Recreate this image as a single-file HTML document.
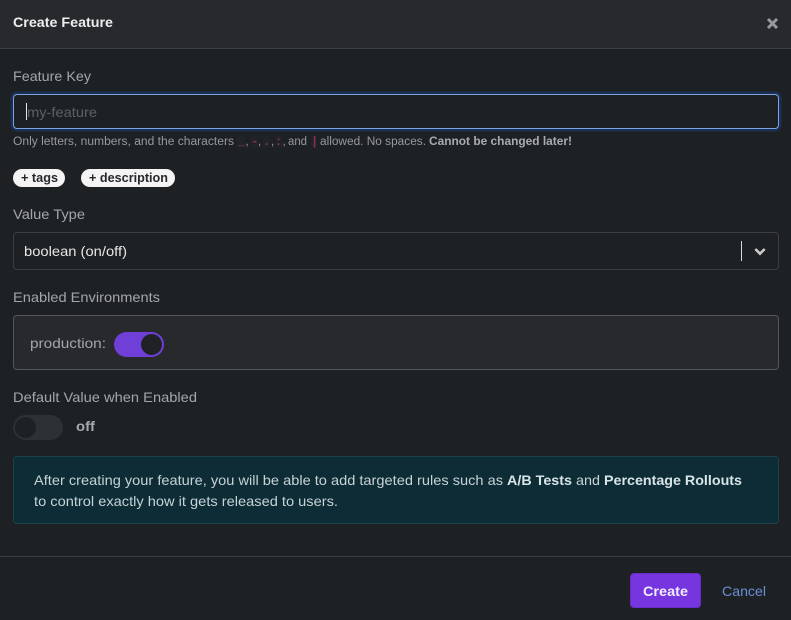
<!DOCTYPE html>
<html lang="en"><head><meta charset="utf-8"><title>Create Feature</title>
<style>
html,body{margin:0;padding:0;background:#1e2124;}
body{position:relative;width:791px;height:620px;overflow:hidden;font-family:"Liberation Sans",sans-serif;}
.a{position:absolute;box-sizing:border-box;}
svg{position:absolute;left:0;top:0;}
text{font-family:"Liberation Sans",sans-serif;font-size:14px;}
.l{fill:#a3a6aa;}
.b{font-weight:700;}
.h{font-size:11.5px;fill:#96999d;}
.c{font-size:12px;fill:#8a3050;font-weight:700;font-family:"Liberation Mono",monospace;}
.t{fill:#c6d2d6;}
.tb{fill:#d8e4e8;font-weight:700;}
</style></head><body>
<div class="a" style="left:0;top:0;width:791px;height:49px;background:#27292d;border-bottom:1px solid #3e4043;"></div>
<div class="a" style="left:13px;top:94px;width:766px;height:35px;border:1px solid #7ba5e2;border-radius:4px;background:#1e2124;box-shadow:0 0 0 2.5px #1c2f52;"></div>
<div class="a" style="left:26px;top:103px;width:1px;height:17px;background:#e8e8e8;"></div>
<div class="a" style="left:13px;top:169px;width:52px;height:18px;background:#f4f4f5;border-radius:9px;"></div>
<div class="a" style="left:81px;top:169px;width:94px;height:18px;background:#f4f4f5;border-radius:9px;"></div>
<div class="a" style="left:13px;top:232px;width:766px;height:38px;border:1px solid #3c3e42;border-radius:4px;"></div>
<div class="a" style="left:741px;top:241px;width:1px;height:20px;background:#d8d8d8;"></div>
<div class="a" style="left:13px;top:315px;width:766px;height:55px;background:#27292d;border:1px solid #54575b;border-radius:4px;"></div>
<div class="a" style="left:114px;top:332px;width:50px;height:25px;background:#6f3fd8;border-radius:13px;"></div>
<div class="a" style="left:141px;top:334px;width:21px;height:21px;background:#1f2125;border-radius:50%;"></div>
<div class="a" style="left:13px;top:415px;width:50px;height:25px;background:#2d3034;border-radius:13px;"></div>
<div class="a" style="left:15px;top:417px;width:21px;height:21px;background:#1e2124;border-radius:50%;"></div>
<div class="a" style="left:13px;top:456px;width:766px;height:68px;background:#0d2c35;border:1px solid #1b414b;border-radius:4px;"></div>
<div class="a" style="left:0;top:556px;width:791px;height:1px;background:#3a3c3f;"></div>
<div class="a" style="left:630px;top:573px;width:71px;height:35px;background:#7735df;border:1px solid #6a2cc9;border-radius:4px;"></div>
<svg width="791" height="620" xmlns="http://www.w3.org/2000/svg">
<text x="13" y="27" textLength="100" lengthAdjust="spacingAndGlyphs" class="b" fill="#edeef0">Create Feature</text>
<path d="M768 19l9 9M777 19l-9 9" stroke="#97999c" stroke-width="3" fill="none"/>
<text x="13" y="81" textLength="78" lengthAdjust="spacingAndGlyphs" class="l">Feature Key</text>
<text x="27" y="117" textLength="70" lengthAdjust="spacingAndGlyphs" fill="#5c6066">my-feature</text>
<text x="13" y="145" textLength="221" lengthAdjust="spacingAndGlyphs" class="h">Only letters, numbers, and the characters</text>
<rect x="237" y="136" width="8" height="12" rx="2" fill="#212327"/>
<rect x="250" y="136" width="8" height="12" rx="2" fill="#212327"/>
<rect x="263" y="136" width="7" height="12" rx="2" fill="#212327"/>
<rect x="275" y="136" width="7" height="12" rx="2" fill="#212327"/>
<rect x="311" y="136" width="6" height="12" rx="2" fill="#212327"/>
<text x="238" y="145" class="c">_</text><text x="245.5" y="145" class="h">,</text>
<text x="251" y="145" class="c">-</text><text x="258" y="145" class="h">,</text>
<text x="263" y="145" class="c">.</text><text x="271" y="145" class="h">,</text>
<text x="275" y="145" class="c">:</text><text x="282.5" y="145" class="h">,</text>
<text x="288" y="145" textLength="19" lengthAdjust="spacingAndGlyphs" class="h">and</text>
<text x="311" y="145" class="c">|</text>
<text x="320" y="145" textLength="106" lengthAdjust="spacingAndGlyphs" class="h">allowed. No spaces.</text>
<text x="429" y="145" textLength="143" lengthAdjust="spacingAndGlyphs" class="h b" style="fill:#a8abaf">Cannot be changed later!</text>
<text x="21" y="182" textLength="37" lengthAdjust="spacingAndGlyphs" class="b" style="font-size:12.5px" fill="#26282c">+ tags</text>
<text x="89" y="182" textLength="79" lengthAdjust="spacingAndGlyphs" class="b" style="font-size:12.5px" fill="#26282c">+ description</text>
<text x="13" y="219" textLength="72" lengthAdjust="spacingAndGlyphs" class="l">Value Type</text>
<text x="24" y="256" textLength="103" lengthAdjust="spacingAndGlyphs" fill="#e6e7e9">boolean (on/off)</text>
<path d="M755.3 249l4.7 4.7 4.7-4.7" stroke="#c9cacc" stroke-width="2.6" fill="none"/>
<text x="13" y="302" textLength="147" lengthAdjust="spacingAndGlyphs" class="l">Enabled Environments</text>
<text x="30" y="348" textLength="76" lengthAdjust="spacingAndGlyphs" class="l">production:</text>
<text x="13" y="402" textLength="184" lengthAdjust="spacingAndGlyphs" class="l">Default Value when Enabled</text>
<text x="76" y="431" textLength="19" lengthAdjust="spacingAndGlyphs" class="b" fill="#a6a9ad">off</text>
<text x="34" y="485" textLength="469" lengthAdjust="spacingAndGlyphs" class="t">After creating your feature, you will be able to add targeted rules such as</text>
<text x="507" y="485" textLength="65" lengthAdjust="spacingAndGlyphs" class="tb">A/B Tests</text>
<text x="576" y="485" textLength="24" lengthAdjust="spacingAndGlyphs" class="t">and</text>
<text x="604" y="485" textLength="138" lengthAdjust="spacingAndGlyphs" class="tb">Percentage Rollouts</text>
<text x="34" y="506" textLength="304" lengthAdjust="spacingAndGlyphs" class="t">to control exactly how it gets released to users.</text>
<text x="643" y="596" textLength="45" lengthAdjust="spacingAndGlyphs" class="b" fill="#f1ecfb">Create</text>
<text x="722" y="596" textLength="44" lengthAdjust="spacingAndGlyphs" fill="#6a8fd6">Cancel</text>
</svg>
</body></html>
